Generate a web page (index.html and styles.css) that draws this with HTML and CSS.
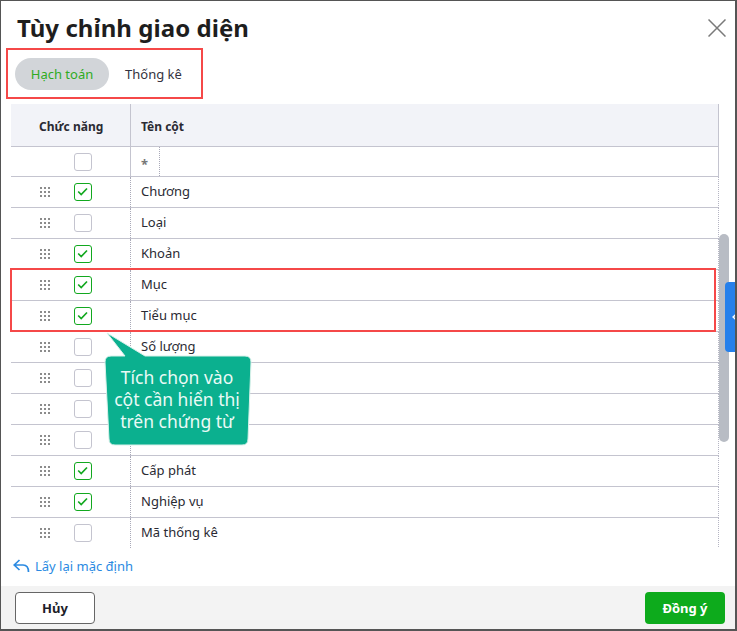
FILE: index.html
```html
<!DOCTYPE html>
<html lang="vi">
<head>
<meta charset="utf-8">
<title>Tùy chỉnh giao diện</title>
<link rel="stylesheet" href="styles.css">
</head>
<body>
<div class="dialog">
  <header class="head">
    <h1 class="title">Tùy chỉnh giao diện</h1>
    <svg class="close" width="18" height="18" viewBox="0 0 18 18"><path d="M.5.5l17 17M17.500.5l-17 17" fill="none" stroke="#7a7a7a" stroke-width="1.500"/></svg>
  </header>
  <nav class="tabs">
    <span class="tab tab-active">Hạch toán</span>
    <span class="tab">Thống kê</span>
  </nav>
  <div class="table">
    <div class="row row-head">
      <div class="cell-fn">Chức năng</div>
      <div class="cell-name">Tên cột</div>
    </div>
    <div class="row row-filter">
      <div class="cell-fn"><span class="grip-space"></span><span class="box"></span></div>
      <div class="cell-name"><span class="star">*</span></div>
    </div>
    <div class="row"><div class="cell-fn"><span class="grip"></span><span class="box on"><svg viewBox="0 0 16 16" width="16" height="16"><path d="M3.200 7.500l3 3L12 4.500" fill="none" stroke="#12a81f" stroke-width="1.700"/></svg></span></div><div class="cell-name">Chương</div></div>
    <div class="row"><div class="cell-fn"><span class="grip"></span><span class="box"></span></div><div class="cell-name">Loại</div></div>
    <div class="row"><div class="cell-fn"><span class="grip"></span><span class="box on"><svg viewBox="0 0 16 16" width="16" height="16"><path d="M3.200 7.500l3 3L12 4.500" fill="none" stroke="#12a81f" stroke-width="1.700"/></svg></span></div><div class="cell-name">Khoản</div></div>
    <div class="row"><div class="cell-fn"><span class="grip"></span><span class="box on"><svg viewBox="0 0 16 16" width="16" height="16"><path d="M3.200 7.500l3 3L12 4.500" fill="none" stroke="#12a81f" stroke-width="1.700"/></svg></span></div><div class="cell-name">Mục</div></div>
    <div class="row"><div class="cell-fn"><span class="grip"></span><span class="box on"><svg viewBox="0 0 16 16" width="16" height="16"><path d="M3.200 7.500l3 3L12 4.500" fill="none" stroke="#12a81f" stroke-width="1.700"/></svg></span></div><div class="cell-name">Tiểu mục</div></div>
    <div class="row"><div class="cell-fn"><span class="grip"></span><span class="box"></span></div><div class="cell-name">Số lượng</div></div>
    <div class="row"><div class="cell-fn"><span class="grip"></span><span class="box"></span></div><div class="cell-name"></div></div>
    <div class="row"><div class="cell-fn"><span class="grip"></span><span class="box"></span></div><div class="cell-name"></div></div>
    <div class="row"><div class="cell-fn"><span class="grip"></span><span class="box"></span></div><div class="cell-name"></div></div>
    <div class="row"><div class="cell-fn"><span class="grip"></span><span class="box on"><svg viewBox="0 0 16 16" width="16" height="16"><path d="M3.200 7.500l3 3L12 4.500" fill="none" stroke="#12a81f" stroke-width="1.700"/></svg></span></div><div class="cell-name">Cấp phát</div></div>
    <div class="row"><div class="cell-fn"><span class="grip"></span><span class="box on"><svg viewBox="0 0 16 16" width="16" height="16"><path d="M3.200 7.500l3 3L12 4.500" fill="none" stroke="#12a81f" stroke-width="1.700"/></svg></span></div><div class="cell-name">Nghiệp vụ</div></div>
    <div class="row row-last"><div class="cell-fn"><span class="grip"></span><span class="box"></span></div><div class="cell-name">Mã thống kê</div></div>
  </div>
  <a class="reset">
    <svg width="17" height="14" viewBox="0 0 17 14"><path d="M6.500 1L1.200 6l5.300 5M1.500 6H10c3.500 0 5.500 2.500 5.500 7" fill="none" stroke="#2b8ae2" stroke-width="1.700"/></svg>
    <span>Lấy lại mặc định</span>
  </a>
  <footer class="foot">
    <button class="btn btn-cancel">Hủy</button>
    <button class="btn btn-ok">Đồng ý</button>
  </footer>

  <span class="mark mark-tabs"></span>
  <span class="mark mark-rows"></span>
  <div class="callout">
    <svg class="callout-shape" width="150" height="118" viewBox="0 0 150 118"><path d="M4 1L42 24H142Q148 24 148 30L145 107Q145 113 139 113H12Q6 113 6 107L2 30Q2 24 8 24H22Z" fill="#0bb08f" stroke="#d8f1ea" stroke-width="1"/></svg>
    <p class="callout-text">Tích chọn vào<br>cột cần hiển thị<br>trên chứng từ</p>
  </div>
  <span class="scroll"></span>
  <span class="side-tab"><svg width="5" height="8" viewBox="0 0 5 8"><path d="M4.500.8L1.200 4l3.300 3.200" fill="none" stroke="#fff" stroke-width="1.600"/></svg></span>
</div>
</body>
</html>
```
FILE: styles.css
```css
* { box-sizing: border-box; }
html, body { margin: 0; padding: 0; }
body { width: 737px; height: 631px; overflow: hidden; background: #fff; font-family: "Noto Sans", "Open Sans", sans-serif; font-size: 13px; color: #2a2a33; }

.dialog { position: relative; width: 737px; height: 631px; border: 1px solid #555; border-width: 1px 2px 2px 1px; display: flex; flex-direction: column; background: #fff; overflow: hidden; }

.head { height: 48px; padding: 9px 9px 0 16px; display: flex; justify-content: space-between; align-items: flex-start; flex: none; }
.title { margin: 0; font-size: 24px; line-height: 36px; font-weight: 700; color: #1e1e1e; letter-spacing: .05px; }
.close { margin: 9px 0 0; }

.tabs { height: 55px; padding: 9px 0 0 14px; display: flex; flex: none; }
.tab { height: 32px; line-height: 32px; padding: 0 16px; border-radius: 16px; color: #333340; }
.tab-active { width: 94px; background: #d2d5d9; color: #2fab1f; text-align: center; padding: 0; }

.table { margin-left: 10px; width: 708px; flex: none; height: 444px; overflow: hidden; }
.row { display: flex; height: 31px; border-bottom: 1px solid #c4c4cf; border-right: 1px dotted #b5b5c3; }
.row-head { height: 43px; background: #f2f3f8; font-weight: 700; font-size: 12px; border-right: 1px solid #c4c4cf; }
.row-filter { height: 30px; border-right: 1px solid #c4c4cf; }
.row-last { border-bottom-color: transparent; }
.cell-fn { width: 119px; flex: none; display: flex; align-items: center; padding-left: 29px; }
.row-head .cell-fn { padding: 2px 0 0 28px; }
.cell-name { flex: 1; display: flex; align-items: center; padding: 0 0 2px 10px; border-left: 1px dotted #a9a9b8; }
.row-head .cell-name, .row-filter .cell-name { border-left: 1px solid #c4c4cf; }
.row-head .cell-name { padding: 2px 0 0 10px; }
.row-filter .cell-name { padding-bottom: 0; }

.grip, .grip-space { width: 11px; height: 10px; margin-right: 23px; flex: none; }
.grip { background-image: radial-gradient(circle at 1px 1px, #8c8c8c 1.100px, transparent 1.200px); background-size: 4px 4px; }
.box { width: 18px; height: 18px; border: 1px solid #c4c4cf; border-radius: 3px; display: flex; align-items: center; justify-content: center; flex: none; background: #fff; }
.box.on { border-color: #12a81f; }
.star { width: 18px; height: 29px; line-height: 35px; color: #777; font-weight: 700; border-right: 1px dotted #a9a9b8; box-sizing: content-box; }

.reset { height: 38px; padding: 0 0 2px 12px; display: flex; align-items: center; gap: 5px; color: #2b8ae2; flex: none; }
.foot { flex: 1; display: flex; justify-content: space-between; align-items: flex-start; background: #f3f3f3; padding: 6px 10px 0 14px; }
.btn { width: 80px; height: 32px; border-radius: 4px; font-family: inherit; font-size: 13px; font-weight: 700; padding: 0; }
.btn-cancel { background: #fff; border: 1px solid #666; color: #1d1d28; }
.btn-ok { background: #0dab1c; border: 0; color: #fff; }

.mark { position: absolute; border: 2px solid #f54848; pointer-events: none; }
.mark-tabs { left: 5px; top: 47px; width: 197px; height: 51px; }
.mark-rows { left: 9px; top: 267px; width: 706px; height: 64px; }

.callout { position: absolute; left: 102px; top: 331px; width: 150px; height: 118px; }
.callout-shape { position: absolute; left: 0; top: 0; }
.callout-text { position: absolute; left: 1px; top: 34px; width: 146px; margin: 0; text-align: center; font-size: 17.5px; line-height: 22px; color: #eafaf6; }

.scroll { position: absolute; left: 718px; top: 233px; width: 10px; height: 208px; border-radius: 5px; background: #b8bcc4; }
.side-tab { position: absolute; left: 724px; top: 281px; width: 12px; height: 70px; background: #2680eb; border-radius: 4px 0 0 4px; display: flex; align-items: center; padding-left: 7px; }
```
